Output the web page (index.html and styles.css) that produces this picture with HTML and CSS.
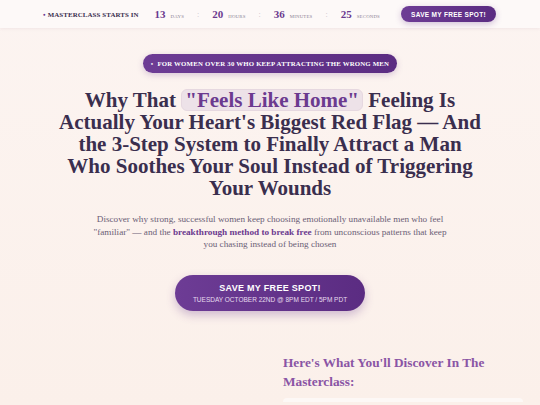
FILE: index.html
```html
<!DOCTYPE html>
<html lang="en">
<head>
<meta charset="utf-8">
<title>Masterclass</title>
<link rel="stylesheet" href="styles.css">
</head>
<body>
<header class="topbar">
  <div class="starts"><span class="dot">●</span> MASTERCLASS STARTS IN</div>
  <div class="countdown">
    <div class="unit"><span class="num">13</span><span class="lbl">DAYS</span></div>
    <span class="sep">:</span>
    <div class="unit"><span class="num">20</span><span class="lbl">HOURS</span></div>
    <span class="sep">:</span>
    <div class="unit"><span class="num">36</span><span class="lbl">MINUTES</span></div>
    <span class="sep">:</span>
    <div class="unit"><span class="num">25</span><span class="lbl">SECONDS</span></div>
  </div>
  <a class="top-btn" href="#">SAVE MY FREE SPOT!</a>
</header>
<main class="hero">
  <div class="badge"><span class="bdot">●</span> FOR WOMEN OVER 30 WHO KEEP ATTRACTING THE WRONG MEN</div>
  <h1 class="title">Why That <span class="hl">"Feels Like Home"</span> Feeling Is Actually Your Heart's Biggest Red Flag — And the 3-Step System to Finally Attract a Man Who Soothes Your Soul Instead of Triggering Your Wounds</h1>
  <p class="lead">Discover why strong, successful women keep choosing emotionally unavailable men who feel "familiar" — and the <strong>breakthrough method to break free</strong> from unconscious patterns that keep you chasing instead of being chosen</p>
  <a class="cta" href="#"><span class="cta-main">SAVE MY FREE SPOT!</span><span class="cta-sub">TUESDAY OCTOBER 22ND @ 8PM EDT / 5PM PDT</span></a>
  <section class="discover">
    <div class="discover-side"></div>
    <div class="discover-main">
      <h2 class="discover-title">Here's What You'll Discover In The Masterclass:</h2>
      <div class="card"></div>
    </div>
  </section>
</main>
</body>
</html>
```
FILE: styles.css
```css
* { box-sizing: border-box; }
html, body { margin: 0; padding: 0; }
body {
  width: 540px;
  height: 405px;
  overflow: hidden;
  background: linear-gradient(180deg, #fcf4f1 0%, #fbf0ea 100%);
  font-family: "Liberation Serif", "DejaVu Serif", serif;
  color: #3a2e4e;
}
.topbar {
  height: 28px;
  background: #fdf9f8;
  box-shadow: 0 1px 3px rgba(120, 80, 110, 0.08);
  display: flex;
  align-items: center;
  padding-left: 43px;
}
.starts {
  font-size: 6.9px;
  font-weight: bold;
  color: #3a2e4e;
  letter-spacing: 0.1px;
}
.dot { color: #6b3a8f; font-size: 4.5px; vertical-align: 1px; }
.countdown {
  display: flex;
  align-items: center;
  margin-left: 16px;
}
.unit { display: flex; align-items: baseline; }
.num {
  font-size: 11px;
  font-weight: bold;
  color: #6b3a8f;
}
.lbl {
  font-size: 4.8px;
  color: #8a7f92;
  margin-left: 5px;
  letter-spacing: 0.2px;
}
.sep {
  color: #c9bfca;
  font-size: 8px;
  margin: 0 13px;
}
.top-btn {
  margin-left: 21px;
  height: 16px;
  width: 95px;
  border-radius: 8px;
  background: linear-gradient(90deg, #6d3c95, #5b2c82);
  color: #fff;
  font-family: "Liberation Sans", Arial, sans-serif;
  font-weight: bold;
  font-size: 6.5px;
  letter-spacing: 0.3px;
  text-decoration: none;
  display: flex;
  align-items: center;
  justify-content: center;
  box-shadow: 0 2px 6px rgba(107, 58, 143, 0.3);
}
.hero {
  display: flex;
  flex-direction: column;
  align-items: center;
  padding-top: 26px;
}
.badge {
  height: 19px;
  width: 254px;
  border-radius: 10px;
  background: linear-gradient(90deg, #6d3c95, #5b2c82);
  color: #fff;
  font-size: 6.8px;
  font-weight: bold;
  letter-spacing: 0.2px;
  display: flex;
  align-items: center;
  justify-content: center;
  box-shadow: 0 2px 6px rgba(107, 58, 143, 0.25);
}
.bdot { font-size: 4px; margin-right: 4px; }
.title {
  margin: 16px 0 0;
  width: 422px;
  text-align: center;
  font-size: 21px;
  line-height: 22px;
  font-weight: bold;
  color: #3a2e4e;
}
.hl {
  display: inline-block;
  line-height: 20px;
  color: #6b3a8f;
  background: #ede2e8;
  border: 1px solid #e6d8e0;
  border-radius: 6px;
  padding: 0 3px;
}
.lead {
  margin: 14px 0 0;
  width: 362px;
  text-align: center;
  font-size: 9.2px;
  line-height: 12.5px;
  color: #6b6076;
}
.lead strong { color: #6b3a8f; }
.cta {
  margin-top: 24px;
  width: 190px;
  height: 36px;
  border-radius: 18px;
  background: linear-gradient(90deg, #6d3c95, #5b2c82);
  color: #fff;
  text-decoration: none;
  font-family: "Liberation Sans", Arial, sans-serif;
  display: flex;
  flex-direction: column;
  align-items: center;
  justify-content: center;
  box-shadow: 0 4px 10px rgba(107, 58, 143, 0.3);
}
.cta-main { font-weight: bold; font-size: 9px; letter-spacing: 0.3px; }
.cta-sub { font-size: 6.5px; margin-top: 3px; color: #e6dbee; }
.discover {
  margin-top: 42px;
  width: 540px;
  display: grid;
  grid-template-columns: 283px 1fr;
}
.discover-title {
  margin: 0;
  font-size: 13.3px;
  line-height: 19px;
  font-weight: bold;
  color: #8a55a5;
  width: 230px;
}
.card {
  margin-top: 7px;
  width: 240px;
  height: 4px;
  background: #fdf8f6;
  border-radius: 4px 4px 0 0;
}
```
